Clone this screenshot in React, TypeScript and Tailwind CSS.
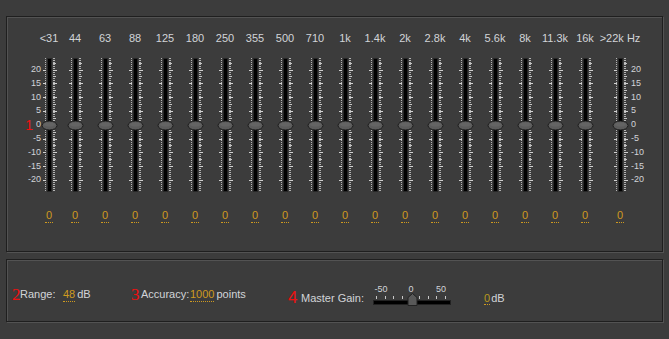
const bands = ['<31', '44', '63', '88', '125', '180', '250', '355', '500', '710', '1k', '1.4k', '2k', '2.8k', '4k', '5.6k', '8k', '11.3k', '16k', '>22k Hz'];
const scale = ['20', '15', '10', '5', '0', '-5', '-10', '-15', '-20'];

// spacing between fader columns, written out so tailwind picks them up
const colGap = (i: number) => {
  if (i === 0) return '-ml-[2px]';
  if (i === 1) return 'ml-[6px]';
  if (i === bands.length - 1) return 'ml-[15px]';
  return 'ml-[10px]';
};

function Fader() {
  const majors = scale.map((_, k) => Math.round(11.5 + 13.8 * k));
  const mids = scale.slice(1).map((_, k) => Math.round(4.5 + 13.8 * k));
  return (
    <svg width="20" height="134" viewBox="0 0 20 134" shapeRendering="crispEdges" className="block overflow-visible">
      <line x1="6.5" y1="0" x2="6.5" y2="134" stroke="#b4b4b4" strokeDasharray="1 1" />
      <line x1="15" y1="0" x2="15" y2="134" stroke="#b4b4b4" strokeWidth="2" strokeDasharray="1 1" />
      {majors.map((y) => (
        <g key={y}>
          <rect x="4" y={y} width="3" height="1" fill="#d0d0d0" />
          <rect x="14" y={y} width="4" height="1" fill="#d0d0d0" />
        </g>
      ))}
      {mids.map((y) => (
        <rect key={y} x="14" y={y} width="3" height="1" fill="#c4c4c4" />
      ))}
      <rect x="8" y="0" width="5" height="134" fill="#262626" />
      <rect x="9" y="1" width="3" height="132" fill="#000" />
      <ellipse cx="10.5" cy="67.5" rx="7.5" ry="4.5" fill="#5c5c5c" stroke="#1c1c1c" shapeRendering="auto" />
      <ellipse cx="10.5" cy="66.5" rx="5.5" ry="2" fill="#646464" shapeRendering="auto" />
    </svg>
  );
}

function GainSlider() {
  const ticks = Array.from({ length: 9 }, (_, i) => Math.round(3 + 8.6 * i));
  return (
    <svg width="78" height="14" viewBox="0 0 78 14" shapeRendering="crispEdges" className="block">
      {ticks.map((x) => (
        <rect key={x} x={x} y="3" width="1" height="3" fill="#c8c8c8" />
      ))}
      <rect x="0" y="7" width="78" height="5" fill="#222" />
      <rect x="1" y="8" width="76" height="3" fill="#000" />
      <polygon points="39.5,0.5 44,4.5 44,12.5 35,12.5 35,4.5" fill="#595959" stroke="#222" shapeRendering="auto" />
    </svg>
  );
}

export default function App() {
  return (
    <div className="w-[669px] h-[339px] bg-[#3c3c3c] pt-[16px] font-['Liberation_Sans',Arial,sans-serif] text-[#d2d4d8] overflow-hidden">
      {/* fader bank */}
      <div className="ml-[6px] w-[657px] h-[236px] border border-[#1f1f1f] shadow-[inset_1px_1px_0_#535353,1px_1px_0_#535353] pt-[14px] flex items-start">
        <div className="w-[34px] flex flex-col">
          <div className="h-[14px]" />
          <div className="mt-[13px] h-[134px] pt-[5px] text-[9px] leading-[13.8px]">
            {scale.map((s) => (
              <div key={s} className="flex justify-end items-center h-[13.8px]">
                {s === '0' && <span className="text-[14px] leading-[14px] text-[#ee1111] mr-[3px]">1</span>}
                <span>{s}</span>
              </div>
            ))}
          </div>
        </div>

        {bands.map((b, i) => (
          <div key={b} className={`${colGap(i)} w-[20px] flex flex-col items-center`}>
            <div className="h-[14px] text-[11px] leading-[14px] whitespace-nowrap flex justify-center">{b}</div>
            <div className="mt-[13px]">
              <Fader />
            </div>
            <div className="mt-[17px] text-[11px] leading-[13px] text-[#cf9a1f] border-b border-dotted border-[#cf9a1f] px-[1px]">0</div>
          </div>
        ))}

        <div className="ml-[1px] flex flex-col">
          <div className="h-[14px]" />
          <div className="mt-[13px] h-[134px] pt-[5px] text-[9px] leading-[13.8px]">
            {scale.map((s) => (
              <div key={s} className="h-[13.8px]">
                {s}
              </div>
            ))}
          </div>
        </div>
      </div>

      {/* settings */}
      <div className="mt-[7px] ml-[6px] w-[657px] h-[63px] border border-[#1f1f1f] shadow-[inset_1px_1px_0_#535353,1px_1px_0_#535353] flex items-start text-[11px]">
        <div className="ml-[5px] w-[119px] flex items-start">
          <span className="mt-[26px] w-[8px] font-['Liberation_Serif',serif] text-[17px] leading-[17px] text-[#ee1111]">2</span>
          <span className="mt-[27px] w-[43px] leading-[14px]">Range:</span>
          <span className="mt-[27px] leading-[14px] text-[#cf9a1f] border-b border-dotted border-[#cf9a1f]">48</span>
          <span className="mt-[27px] ml-[2px] leading-[14px]">dB</span>
        </div>
        <div className="w-[157px] flex items-start">
          <span className="mt-[26px] w-[10px] font-['Liberation_Serif',serif] text-[17px] leading-[17px] text-[#ee1111]">3</span>
          <span className="mt-[27px] w-[49px] leading-[14px]">Accuracy:</span>
          <span className="mt-[27px] leading-[14px] text-[#cf9a1f] border-b border-dotted border-[#cf9a1f]">1000</span>
          <span className="mt-[27px] ml-[2px] leading-[14px]">points</span>
        </div>
        <div className="w-[85px] flex items-start">
          <span className="mt-[29px] w-[13px] text-[17px] leading-[17px] text-[#ee1111]">4</span>
          <span className="mt-[31px] leading-[14px]">Master Gain:</span>
        </div>
        <div className="mt-[25px] w-[78px] flex flex-col">
          <div className="h-[8px] flex gap-[14px] text-[9px] leading-[8px]">
            <span className="w-[16px] text-center">-50</span>
            <span className="w-[16px] text-center">0</span>
            <span className="w-[16px] text-center">50</span>
          </div>
          <GainSlider />
        </div>
        <div className="ml-[33px] mt-[32px] flex items-start">
          <span className="leading-[12px] text-[#b89a1e] border-b border-dotted border-[#cf9a1f]">0</span>
          <span className="ml-[1px] leading-[12px]">dB</span>
        </div>
      </div>
    </div>
  );
}
